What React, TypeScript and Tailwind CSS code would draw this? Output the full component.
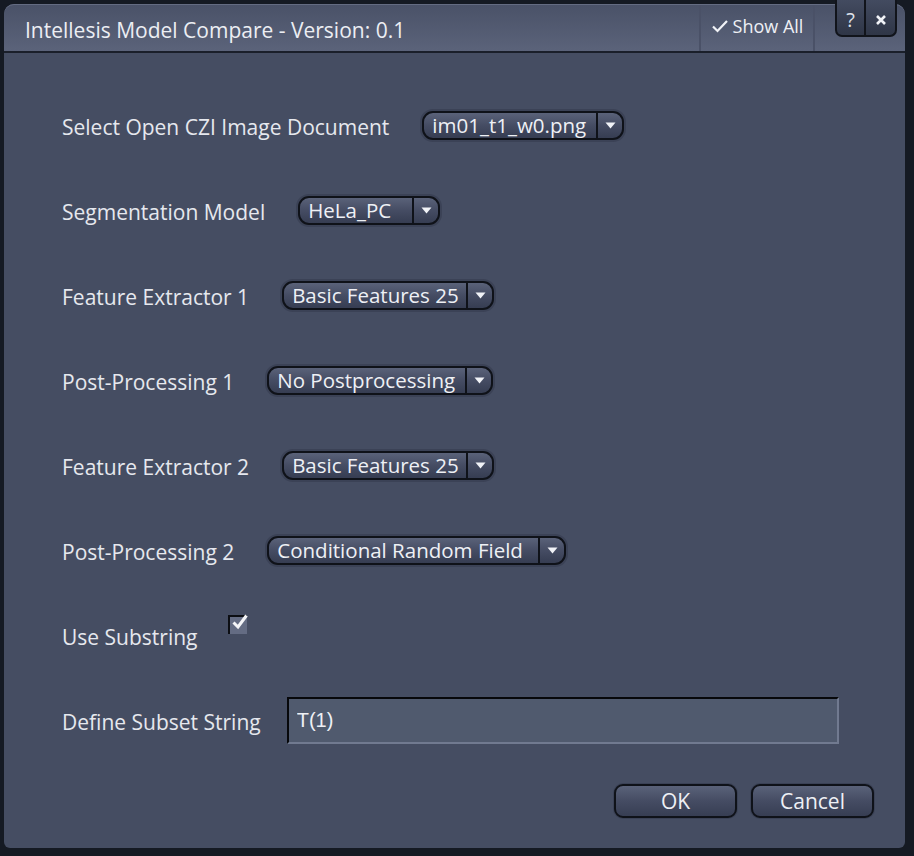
import React, { useState } from 'react';

const font = { fontFamily: '"Open Sans", "Noto Sans", "Liberation Sans", sans-serif' };

function Dropdown({ value, width }: { value: string; width: string }) {
  return (
    <div className="rounded-[13px] p-[2px] bg-[#3b4256] -translate-y-[2px]">
      <div className={`${width} flex items-stretch h-[29px] rounded-[11px] border-2 border-[#0f1219] bg-gradient-to-b from-[#5a6279] via-[#454c63] to-[#363d52] overflow-hidden`}>
        <div className="flex-1 pl-[8px] flex items-center text-[20.5px] leading-none text-[#eef0f5] whitespace-nowrap">
          {value}
        </div>
        <div className="w-[2px] bg-[#0f1219]" />
        <div className="w-[24px] flex items-center justify-center">
          <svg width="11" height="7" viewBox="0 0 11 7">
            <path d="M0.5 0.5 L10.5 0.5 L5.5 6.5 Z" fill="#f1f3f7" />
          </svg>
        </div>
      </div>
    </div>
  );
}

function Row({ label, children }: { label: string; children: React.ReactNode }) {
  return (
    <div className="h-[85px] flex items-center gap-[31px]">
      <span className="text-[21px] text-[#e6e8ee] whitespace-nowrap">{label}</span>
      {children}
    </div>
  );
}

export default function App() {
  const [checked, setChecked] = useState(true);
  const [subset, setSubset] = useState('T(1)');

  return (
    <div className="w-[914px] h-[856px] bg-[#151a23] pt-[4px] pl-[4px]" style={font}>
      <div className="w-[901px] h-[844px] bg-[#454d62] rounded-t-[10px] rounded-b-[6px] flex flex-col">
        {/* title bar */}
        <div className="h-[47px] flex items-stretch rounded-t-[10px] bg-gradient-to-b from-[#4a5268] to-[#5b637a] border-t border-[#646c82] shrink-0">
          <div className="flex-1 flex items-center pl-[21px] pt-[6px] text-[21px] text-[#eceef3] whitespace-nowrap">
            Intellesis Model Compare - Version: 0.1
          </div>
          <div className="w-[116px] flex items-center justify-center gap-[4px] pb-[4px] border-l-2 border-r-2 border-[#4a5167] text-[18px] text-[#eef0f5]">
            <svg width="18" height="14" viewBox="0 0 18 14">
              <path d="M2 7.5 L6.5 12 L16 2" stroke="#f1f3f7" strokeWidth="2.2" fill="none" />
            </svg>
            <span>Show All</span>
          </div>
          <div className="w-[90px] flex items-start justify-center pl-[12px]">
            <div className="flex h-[37px] -mt-[5px] rounded-b-[7px] border-2 border-t-0 border-[#11141b] bg-gradient-to-b from-[#434b60] to-[#2f3647] overflow-hidden">
              <div className="w-[27px] flex items-center justify-center pt-[4px] text-[20px] text-[#dfe2ea] leading-none">?</div>
              <div className="w-[2px] bg-[#11141b]" />
              <div className="w-[29px] flex items-center justify-center pt-[4px]">
                <svg width="12" height="12" viewBox="0 0 12 12">
                  <path d="M2 2 L10 10 M10 2 L2 10" stroke="#f1f3f7" strokeWidth="2.6" />
                </svg>
              </div>
            </div>
          </div>
        </div>
        <div className="h-[2px] bg-[#1a1f2a] shrink-0" />

        {/* body */}
        <div className="flex-1 flex flex-col pl-[58px] pt-[32px] pr-[30px]">
          <Row label="Select Open CZI Image Document">
            <Dropdown value="im01_t1_w0.png" width="w-[202px]" />
          </Row>
          <Row label="Segmentation Model">
            <Dropdown value="HeLa_PC" width="w-[142px]" />
          </Row>
          <Row label="Feature Extractor 1">
            <Dropdown value="Basic Features 25" width="w-[212px]" />
          </Row>
          <Row label="Post-Processing 1">
            <Dropdown value="No Postprocessing" width="w-[226px]" />
          </Row>
          <Row label="Feature Extractor 2">
            <Dropdown value="Basic Features 25" width="w-[212px]" />
          </Row>
          <Row label="Post-Processing 2">
            <Dropdown value="Conditional Random Field" width="w-[299px]" />
          </Row>
          <Row label="Use Substring">
            <button
              onClick={() => setChecked(!checked)}
              className="relative w-[19px] h-[19px] -translate-y-[13px] border-t-2 border-l-2 border-[#0c0e13] bg-[#646c83]"
            >
              {checked && (
                <svg className="absolute -top-[4px] left-[1px]" width="18" height="18" viewBox="0 0 18 18">
                  <path d="M2.5 9.5 L7 14 L15.5 2.5" stroke="#f4f5f8" strokeWidth="3" fill="none" />
                </svg>
              )}
            </button>
          </Row>
          <Row label="Define Subset String">
            <input
              value={subset}
              onChange={(e) => setSubset(e.target.value)}
              className="-ml-[5px] w-[552px] h-[47px] -translate-y-[2px] border-2 border-t-[#07080b] border-l-[#07080b] border-b-[#717a90] border-r-[#717a90] bg-[#505a6e] px-[8px] text-[20px] text-[#eef0f5] outline-none"
              style={{ fontFamily: '"Liberation Sans", sans-serif' }}
            />
          </Row>

          <div className="flex justify-end gap-[12px] mt-[18px]">
            {['OK', 'Cancel'].map((t) => (
              <div key={t} className="rounded-[10px] p-[1px] bg-[#3b4256]">
                <button className="w-[123px] h-[34px] rounded-[9px] border-2 border-[#0f1219] bg-gradient-to-b from-[#5a6279] via-[#454c63] to-[#373e53] text-[21px] text-[#eef0f5] leading-none">
                  {t}
                </button>
              </div>
            ))}
          </div>
        </div>
      </div>
    </div>
  );
}
